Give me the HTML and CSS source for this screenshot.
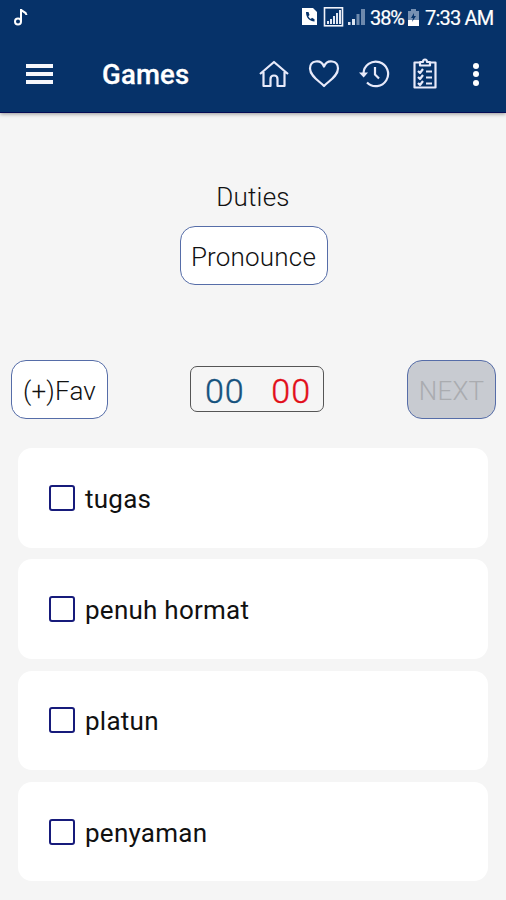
FILE: index.html
```
<!DOCTYPE html>
<html lang="id">
<head>
<meta charset="utf-8">
<title>Games</title>
<link rel="stylesheet" href="styles.css">
</head>
<body>
<header class="header">
  <div class="status">
    <svg class="note" width="16" height="20" viewBox="0 0 16 20"><circle cx="4" cy="14.500" r="3" /><path d="M7 14.500V2c0 3 5 2 5.500 6" /></svg>
    <div class="status-right">
      <svg class="signals" width="64" height="20" viewBox="0 0 64 20">
        <path fill="#fff" d="M0 1h11l4 4v13H0z"/>
        <path fill="#063269" d="M4 5l2.500 0 1 3-1.200 1.200q1 2 2.500 2.700l1.200-1.200 2.500 1.500v2.300C8 14.500 4 11 4 5z"/>
        <rect x="22.500" y="0.800" width="18" height="18" fill="none" stroke="#f1f3fa" stroke-width="1.600"/>
        <path fill="#e3e8f3" d="M25 14h2v3h-2zM28 12h2v5h-2zM31 9h2v8h-2zM34 6h2v11h-2zM37 3h2v14h-2z"/>
        <path fill="#dce4f0" d="M46 15h2.500v3H46zM50 12h3v6h-3z"/>
        <path fill="#6d89ad" d="M54.500 7h3v11h-3zM59 2h4v16h-4z"/>
      </svg>
      <span class="percent">38%</span>
      <svg class="battery" width="11" height="18" viewBox="0 0 11 18"><path fill="#7690b2" d="M3 0h5v2h3v9H0V2h3z"/><path fill="#fff" d="M0 11h11v6H0z"/><path fill="#063269" d="M6 4L3 9h2l-1 4 4-6H6z"/></svg>
      <span class="time">7:33 AM</span>
    </div>
  </div>
  <div class="toolbar">
    <div class="burger"><i></i><i></i><i></i></div>
    <h1 class="title">Games</h1>
    <svg class="icon home" width="32" height="32" viewBox="0 0 32 32"><path d="M2 16L16 4l14 12M5.500 14v14h7v-7q0-3.500 3.500-3.500t3.500 3.500v7h7V14"/></svg>
    <svg class="icon heart" width="32" height="32" viewBox="0 0 32 32"><path d="M16 28C12 23.500 2 18.500 2 10.500 2 2 13 1 16 8.500 19 1 30 2 30 10.500 30 18.500 20 23.500 16 28z"/></svg>
    <svg class="icon history" width="32" height="32" viewBox="0 0 32 32"><path d="M5.500 15.500A12.300 12.300 0 1 1 9 24.500M17 9v7.500l4 4"/><path class="solid" d="M1 14.500h9l-4.300 5z"/></svg>
    <svg class="icon clip" width="26" height="32" viewBox="0 0 26 32"><path d="M8 4.500H2.500v25h21v-25H18M8 7.500V4h3q0-2.500 2-2.500T15 4h3v3.500zM6 13l2 2 3-4M14 13.500h6M6 19l2 2 3-4M14 19.500h6M6 25l2 2 3-4M14 25.500h6"/></svg>
    <div class="more"><i></i><i></i><i></i></div>
  </div>
</header>
<main>
  <section class="question">
    <div class="word">Duties</div>
    <button class="btn pronounce">Pronounce</button>
  </section>
  <section class="controls">
    <button class="btn fav">(+)Fav</button>
    <div class="score"><span class="right">00</span><span class="wrong">00</span></div>
    <button class="btn next" disabled>NEXT</button>
  </section>
  <section class="answers">
    <label class="answer"><span class="box"></span><span>tugas</span></label>
    <label class="answer"><span class="box"></span><span>penuh hormat</span></label>
    <label class="answer"><span class="box"></span><span>platun</span></label>
    <label class="answer"><span class="box"></span><span>penyaman</span></label>
  </section>
</main>
</body>
</html>
```
FILE: styles.css
```
* { box-sizing: border-box; }
body { margin: 0; width: 506px; height: 900px; overflow: hidden; background: #f5f5f5; font-family: Roboto, sans-serif; color: #111; }
.header { height: 113px; background: #063269; border-bottom: 1px solid #050c55; box-shadow: 0 1px 4px rgba(0,0,0,.4); color: #fff; }
.status { height: 36px; display: flex; justify-content: space-between; align-items: flex-start; padding: 7px 13px 0 14px; }
.note { fill: none; stroke: #fff; stroke-width: 2; }
.status-right { display: flex; font-size: 20px; line-height: 22px; }
.percent { width: 34px; margin-left: 4px; letter-spacing: -1.1px; white-space: nowrap; font-weight: 400; -webkit-text-stroke: .2px #fff; }
.battery { margin: 2px 6px 0 4px; }
.time { width: 68px; letter-spacing: -.8px; white-space: nowrap; font-weight: 400; -webkit-text-stroke: .2px #fff; }
.toolbar { height: 76px; display: flex; align-items: center; padding-left: 26px; }
.burger { width: 27px; height: 20px; display: flex; flex-direction: column; justify-content: space-between; }
.burger i { height: 4px; background: #f6f7fc; }
.title { margin: 2px 0 0 49px; width: 156px; font-size: 27.500px; line-height: 32px; font-weight: 500; letter-spacing: .2px; -webkit-text-stroke: .3px #fff; }
.icon { flex: none; fill: none; stroke: #e8eafa; stroke-width: 2.2; stroke-linejoin: round; }
.icon .solid { fill: #e8eafa; stroke: none; }
.heart { margin-left: 18px; }
.history { margin-left: 18px; }
.clip { margin-left: 22px; }
.more { margin-left: 35px; height: 23px; display: flex; flex-direction: column; justify-content: space-between; }
.more i { width: 6px; height: 6px; border-radius: 50%; background: #fff; }
.question { height: 247px; padding-top: 68px; display: flex; flex-direction: column; align-items: center; }
.word { font-size: 26px; line-height: 32px; font-weight: 300; letter-spacing: .2px; }
.btn { height: 59px; padding: 2px 0 0; border: 1px solid #566da8; border-radius: 15px; background: #fff; color: #111; font: 300 26px Roboto, sans-serif; letter-spacing: .2px; text-align: center; white-space: nowrap; }
.pronounce { width: 148px; margin: 13px 0 0 1px; }
.controls { height: 59px; padding: 0 10px 0 11px; display: flex; justify-content: space-between; align-items: center; }
.fav { width: 97px; }
.score { width: 134px; height: 46px; border: 1px solid #555; border-radius: 7px; display: flex; justify-content: space-between; padding: 2px 12px 0 14px; font-size: 34px; font-weight: 300; line-height: 45px; letter-spacing: 1px; margin: 0 1px 1px 0; -webkit-text-stroke: .4px currentColor; }
.right { color: #15527e; }
.wrong { color: #e20d18; }
.next { width: 89px; background: #c8cbd1; color: #aaacb0; }
.answers { padding: 29px 18px 0; display: grid; grid-auto-rows: 99.500px; gap: 11.800px; }
.answer { background: #fff; border-radius: 14px; display: flex; align-items: center; padding: 2px 0 0 31px; font-size: 26px; line-height: 32px; letter-spacing: .25px; }
.box { width: 26px; height: 26px; border: 2px solid #171b7b; border-radius: 3px; margin: -2px 10px 0 0; }
```
